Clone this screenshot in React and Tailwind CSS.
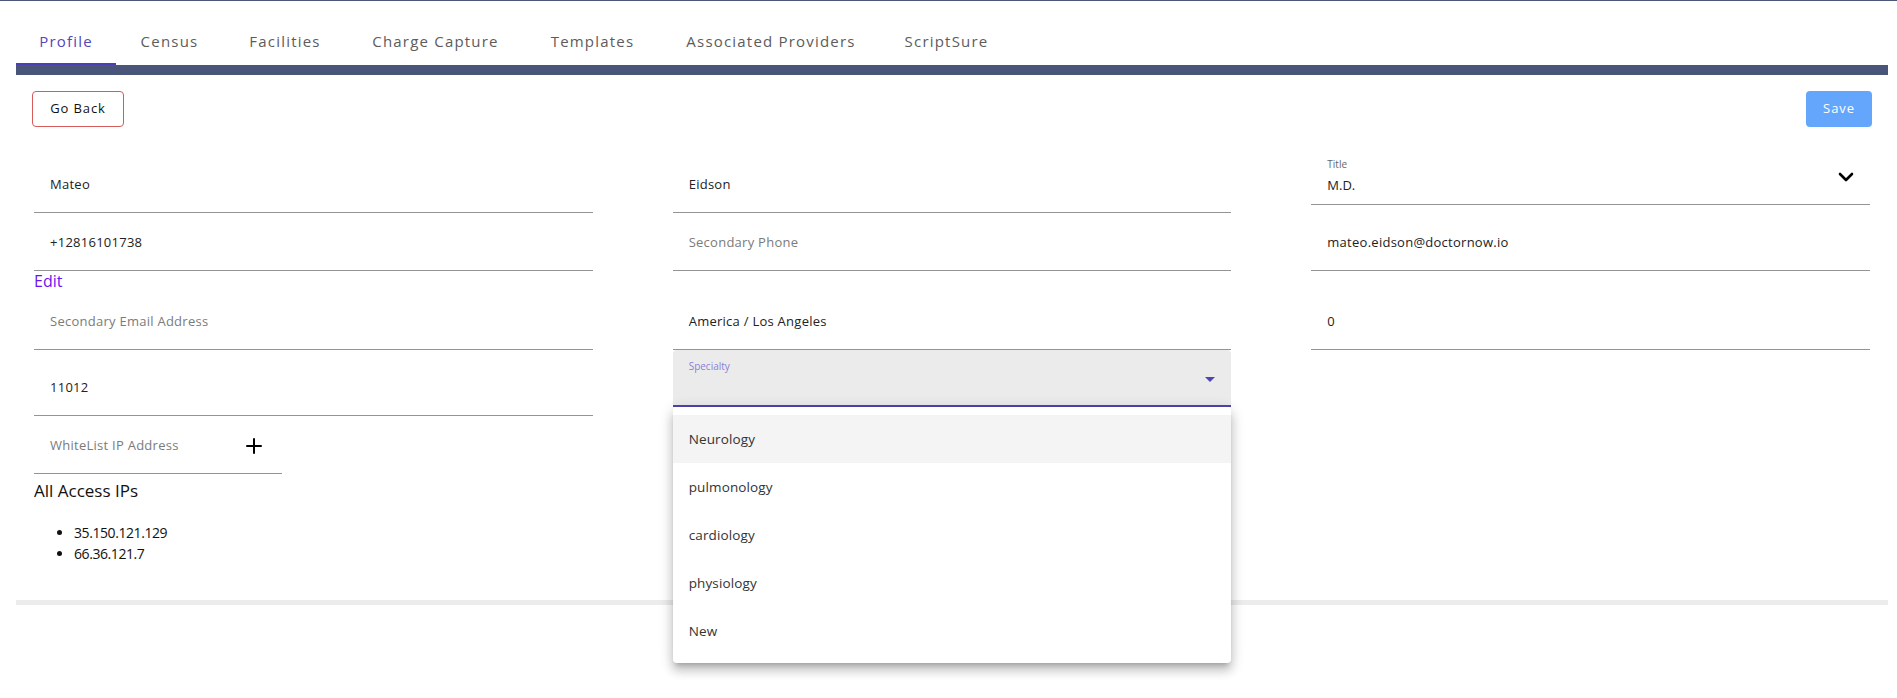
import { ChevronDown, Plus } from 'lucide-react'

const tabs = [
    { label: 'Profile', w: 'w-[100px]', active: true },
    { label: 'Census', w: 'w-[107px]' },
    { label: 'Facilities', w: 'w-[124px]' },
    { label: 'Charge Capture', w: 'w-[177px]' },
    { label: 'Templates', w: 'w-[137px]' },
    { label: 'Associated Providers', w: 'w-[220px]' },
    { label: 'ScriptSure', w: 'w-[131px]' },
]

const specialties = ['Neurology', 'pulmonology', 'cardiology', 'physiology', 'New']

function Field({ value, placeholder, className = '' }) {
    return (
        <div className={`flex h-[58px] items-center border-b border-[#949494] pl-4 pt-[2px] text-[13px] tracking-[0.02em] ${className}`}>
            {value
                ? <span className="text-[#222]">{value}</span>
                : <span className="text-[#7b7b7b]">{placeholder}</span>}
        </div>
    )
}

function TitleSelect() {
    return (
        <div className="flex h-[50px] justify-between self-start border-b border-[#949494] pl-4 pr-3">
            <div className="flex flex-col">
                <span className="mt-[3px] text-[10px] leading-[12px] text-[#666]">Title</span>
                <span className="mt-[5px] text-[13px] leading-[20px] text-[#222]">M.D.</span>
            </div>
            <ChevronDown size={24} strokeWidth={2.6} className="mt-[10px] text-black" />
        </div>
    )
}

function SpecialtySelect() {
    return (
        <div className="relative self-start">
            <div className="flex h-[57px] justify-between rounded-t bg-[#ebebeb] border-b-2 border-[#4f44b3] pl-4 pr-[9px]">
                <span className="mt-[10px] text-[10px] leading-[12px] text-[#8a7fd8]">Specialty</span>
                <svg width="24" height="24" viewBox="0 0 24 24" className="mt-[17px] text-[#4f44b3]">
                    <path d="M7 10l5 5 5-5z" fill="currentColor" />
                </svg>
            </div>
            <div className="absolute left-0 right-0 top-full z-10 rounded bg-white py-2 shadow-[0_5px_5px_-3px_rgba(0,0,0,0.2),0_8px_10px_1px_rgba(0,0,0,0.14),0_3px_14px_2px_rgba(0,0,0,0.12)]">
                {specialties.map((s, i) => (
                    <div
                        key={s}
                        className={`flex h-12 items-center px-4 text-[13.5px] tracking-[0.01em] text-[#333] ${i === 0 ? 'bg-[#f4f4f4]' : ''}`}
                    >
                        {s}
                    </div>
                ))}
            </div>
        </div>
    )
}

function App() {
    return (
        <div className="min-h-screen border-t border-[#4b5679] bg-white font-['Open_Sans',sans-serif]">
            <div className="ml-4 mr-[9px]">
                <div className="flex pt-4">
                    {tabs.map((t) => (
                        <div
                            key={t.label}
                            className={`relative flex h-12 items-center justify-center text-[15px] font-medium tracking-[0.08em] ${t.w} ${t.active ? 'text-[#5446bb]' : 'text-[#5c5c5c]'}`}
                        >
                            {t.label}
                            {t.active && <span className="absolute bottom-0 left-0 right-0 h-[2px] bg-[#4b3fb3]" />}
                        </div>
                    ))}
                </div>
                <div className="h-[10px] bg-[#4a5679]" />

                <div className="flex justify-between px-4 pt-4">
                    <button className="h-9 w-[92px] rounded border-[1.5px] border-[#d65c5c] text-[13px] font-medium tracking-[0.07em] text-[#111]">
                        Go Back
                    </button>
                    <button className="h-9 w-[66px] rounded bg-[#64a6fc] text-[13px] font-medium tracking-[0.07em] text-white">
                        Save
                    </button>
                </div>

                <div className="mt-[28px] grid grid-cols-3 gap-x-20 px-[18px]">
                    <Field value="Mateo" />
                    <Field value="Eidson" />
                    <TitleSelect />

                    <Field value="+12816101738" />
                    <Field placeholder="Secondary Phone" />
                    <Field value="mateo.eidson@doctornow.io" />

                    <div className="flex flex-col">
                        <a href="#" className="h-[21px] text-[16px] leading-[21px] text-[#6a12f0]">Edit</a>
                        <Field placeholder="Secondary Email Address" />
                    </div>
                    <Field value="America / Los Angeles" className="self-end" />
                    <Field value="0" className="self-end" />

                    <Field value="11012" className="mt-2" />
                    <SpecialtySelect />
                    <div />

                    <div className="flex h-[58px] w-[248px] items-center justify-between border-b border-[#949494] pl-4 pr-4 pt-[2px] text-[13px] tracking-[0.02em]">
                        <span className="text-[#7b7b7b]">WhiteList IP Address</span>
                        <Plus size={24} strokeWidth={2} className="text-black" />
                    </div>
                </div>

                <div className="px-[18px]">
                    <h3 className="mt-[6px] text-[17px] leading-[22px] text-[#111]">All Access IPs</h3>
                    <ul className="mt-5 list-disc pl-10 text-[14px] leading-[21px] tracking-[-0.03em] text-[#111]">
                        <li>35.150.121.129</li>
                        <li>66.36.121.7</li>
                    </ul>
                </div>

                <div className="mt-[36px] h-[5px] bg-[#ececec]" />
            </div>
        </div>
    )
}

export default App
